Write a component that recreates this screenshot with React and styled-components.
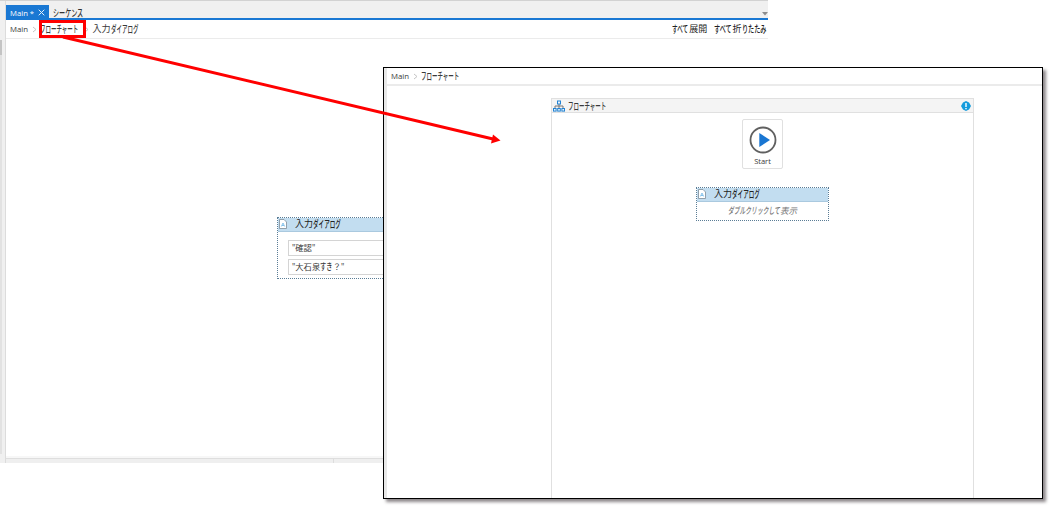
import React from 'react';
import styled, { createGlobalStyle } from 'styled-components';

const GlobalStyle = createGlobalStyle`
  * {
    box-sizing: border-box;
  }
  body {
    margin: 0;
    background: #fff;
    overflow: hidden;
    font-family: "Open Sans", "Noto Sans CJK JP", sans-serif;
    color: #3a3a3a;
  }
`;

const Stage = styled.main`
  position: relative;
  width: 1052px;
  height: 508px;
  overflow: hidden;
`;

const Line = styled.span`
  display: inline-flex;
  align-items: center;
  font-size: ${(p) => p.$size}px;
  line-height: 14px;
  height: 14px;
  white-space: pre;
  color: ${(p) => p.$color || 'inherit'};
  font-style: ${(p) => (p.$italic ? 'italic' : 'normal')};
`;

const Run = styled.span`
  display: block;
  width: ${(p) => p.$width}px;
  font-size: 1.1em;
  font-weight: 500;
  white-space: pre;
  transform: scaleX(${(p) => p.$scale});
  transform-origin: 0 50%;
`;

// kana is set narrow, kanji and latin keep their full width
const Label = ({ text, size = 9, kana = 0.65, ...rest }) => (
  <Line $size={size} {...rest}>
    {text.match(/[\u3040-\u30ff]+|[^\u3040-\u30ff]+/g).map((part, i) =>
      /[\u3040-\u30ff]/.test(part) ? (
        <Run key={i} $width={part.length * size * kana} $scale={kana / 1.1}>{part}</Run>
      ) : (
        <span key={i}>{part}</span>
      )
    )}
  </Line>
);

const EditorWindow = styled.section`
  position: absolute;
  left: 0;
  top: 0;
  width: 768px;
  height: 463px;
  display: flex;
  overflow: hidden;
  border-top: 1px solid #d2d2d2;
  background: #f0f0f0;
`;

const Gutter = styled.div`
  width: 6px;
  flex: none;
  border-right: 1px solid #dcdcdc;
  padding-top: 39px;
`;

const GutterThumb = styled.div`
  width: 2px;
  height: 414px;
  background: linear-gradient(#c4c4c4 15px, #e2e2e2 15px);
`;

const EditorBody = styled.div`
  flex: 1;
  display: flex;
  flex-direction: column;
`;

const TabBar = styled.div`
  height: 19px;
  flex: none;
  display: flex;
  padding-top: 4px;
  border-bottom: 2px solid #1a78d3;
`;

const Tab = styled.div`
  display: flex;
  align-items: center;
  height: 15px;
  padding-left: 4px;
  width: ${(p) => (p.$active ? 43 : 50)}px;
  background: ${(p) => (p.$active ? '#1a78d3' : 'transparent')};
  color: ${(p) => (p.$active ? '#fff' : '#333')};
`;

const CloseIcon = styled.svg`
  margin-left: 4px;
`;

const TabMenu = styled.svg`
  margin: 7px 0 0 auto;
`;

const Crumbs = styled.nav`
  display: flex;
  flex: none;
  align-items: center;
  height: ${(p) => p.$height}px;
  padding-left: 4px;
  background: #fff;
  border-bottom: ${(p) => p.$rule}px solid #ebebeb;
`;

const Chevron = styled.svg`
  flex: none;
  margin: 0 ${(p) => p.$after}px 0 ${(p) => p.$before}px;
`;

const CrumbActions = styled.div`
  display: flex;
  gap: 7px;
  margin-left: auto;
  padding-right: 2px;
  color: #222;
`;

const EditorCanvas = styled.div`
  flex: 1;
  background: #fff;
  padding: 178px 0 0 271px;
`;

const StatusBar = styled.div`
  height: 7px;
  flex: none;
  display: flex;
  border-top: 2px solid #f7f7f7;
  background: #efefef;
  box-shadow: inset 0 1px #dedede;
`;

const StatusPane = styled.div`
  width: ${(p) => p.$width}px;
  border-right: 1px solid #ddd;
`;

const Activity = styled.div`
  width: ${(p) => p.$width}px;
  height: ${(p) => p.$height}px;
  border: 1px dotted #5b7d96;
  background: #fff;
`;

const ActivityHead = styled.div`
  display: flex;
  align-items: center;
  height: 14px;
  padding: 0 0 2px 1px;
  gap: 8px;
  background: #c2ddf0;
  border-bottom: 1px solid #aac9df;
  color: #222;
`;

const Fields = styled.div`
  display: flex;
  flex-direction: column;
  gap: 3px;
  padding: 8px 10px 0;
`;

const Field = styled.div`
  display: flex;
  align-items: center;
  height: 16px;
  padding-left: 3px;
  border: 1px solid #d4d4d4;
`;

const Hint = styled.div`
  display: flex;
  justify-content: center;
  align-items: center;
  height: 18px;
`;

const FlowWindow = styled.section`
  position: absolute;
  left: 383px;
  top: 67px;
  width: 660px;
  height: 432px;
  display: flex;
  background: #fff;
  border: 1px solid #000;
  box-shadow: 3px 3px 3px rgba(50, 40, 45, 0.55);
`;

const Edge = styled.div`
  width: 3px;
  flex: none;
  background: #e8e8e8;
`;

const FlowBody = styled.div`
  flex: 1;
  display: flex;
  flex-direction: column;
`;

const Panel = styled.div`
  width: 423px;
  flex: 1;
  margin: 12px 0 0 164px;
  display: flex;
  flex-direction: column;
  align-items: center;
  border: 1px solid #e0e0e0;
  border-bottom: 0;
`;

const PanelHead = styled.div`
  align-self: stretch;
  display: flex;
  align-items: center;
  height: 14px;
  padding: 0 2px 0 1px;
  gap: 3px;
  background: #f4f4f4;
  border-bottom: 1px solid #e0e0e0;
`;

const InfoIcon = styled.svg`
  margin-left: auto;
`;

const StartNode = styled.div`
  display: flex;
  flex-direction: column;
  align-items: center;
  width: 41px;
  height: 50px;
  margin: 6px 0 18px;
  padding-top: 6px;
  border: 1px solid #e0e0e0;
  border-radius: 2px;
`;

const Arrow = styled.svg`
  position: absolute;
  left: 0;
  top: 0;
`;

const Separator = ({ before, after }) => (
  <Chevron $before={before} $after={after} width="5" height="7" viewBox="0 0 5 7">
    <path d="M1 1 L4 3.5 L1 6" fill="none" stroke="#c4c4c4" />
  </Chevron>
);

const DocIcon = () => (
  <svg width="8" height="10" viewBox="0 0 8 10">
    <path d="M.5 .5 H5 L7.5 3 V9.5 H.5 Z" fill="#fff" stroke="#7d8c97" strokeWidth=".8" />
    <path d="M2.3 7.5 L4 4 L5.7 7.5 M3 6.5 H5" fill="none" stroke="#6db5e6" strokeWidth=".8" />
  </svg>
);

const TreeIcon = () => (
  <svg width="12" height="12" viewBox="0 0 12 12">
    <path d="M6 4 V8 M2 8 V6 H10 V8" fill="none" stroke="#777" />
    <g fill="#e9f4fc" stroke="#2382d2">
      <rect x="4.5" y="1" width="3" height="3" />
      <rect x=".5" y="8.5" width="2.6" height="2.6" />
      <rect x="4.7" y="8.5" width="2.6" height="2.6" />
      <rect x="8.9" y="8.5" width="2.6" height="2.6" />
    </g>
  </svg>
);

const App = () => (
  <>
    <GlobalStyle />
    <Stage>
      <EditorWindow>
        <Gutter>
          <GutterThumb />
        </Gutter>
        <EditorBody>
          <TabBar>
            <Tab $active>
              <Label text="Main *" size={7.7} />
              <CloseIcon width="7" height="7" viewBox="0 0 7 7">
                <path d="M.7 .7 L6.3 6.3 M6.3 .7 L.7 6.3" stroke="#e3effa" />
              </CloseIcon>
            </Tab>
            <Tab>
              <Label text="シーケンス" kana={0.68} />
            </Tab>
            <TabMenu width="6" height="4" viewBox="0 0 6 4">
              <path d="M0 0 H6 L3 3.5 Z" fill="#8d8d8d" />
            </TabMenu>
          </TabBar>
          <Crumbs $height={19} $rule={1}>
            <Label text="Main" size={7.8} />
            <Separator before={4} after={3} />
            <Label text="フローチャート" kana={0.61} />
            <Separator before={5} after={4} />
            <Label text="入力ダイアログ" kana={0.61} />
            <CrumbActions>
              <Label text="すべて展開" kana={0.62} />
              <Label text="すべて折りたたみ" kana={0.68} />
            </CrumbActions>
          </Crumbs>
          <EditorCanvas>
            <Activity $width={134} $height={62}>
              <ActivityHead>
                <DocIcon />
                <Label text="入力ダイアログ" kana={0.62} />
              </ActivityHead>
              <Fields>
                <Field>
                  <Label text={'"確認"'} size={8.3} />
                </Field>
                <Field>
                  <Label text={'"大石泉すき？"'} size={8.3} kana={0.75} />
                </Field>
              </Fields>
            </Activity>
          </EditorCanvas>
          <StatusBar>
            <StatusPane $width={328} />
          </StatusBar>
        </EditorBody>
      </EditorWindow>

      <FlowWindow>
        <Edge />
        <FlowBody>
          <Crumbs $height={18} $rule={2}>
            <Label text="Main" size={7.8} />
            <Separator before={4} after={3} />
            <Label text="フローチャート" kana={0.61} />
          </Crumbs>
          <Panel>
            <PanelHead>
              <TreeIcon />
              <Label text="フローチャート" kana={0.61} />
              <InfoIcon width="10" height="10" viewBox="0 0 10 10">
                <path d="M5 0 L8 1.5 L10 5 L8 8.5 L5 10 L2 8.5 L0 5 L2 1.5 Z" fill="#159bdc" />
                <path d="M5 2 V6 M5 7 V8.3" stroke="#fff" strokeWidth="1.4" />
              </InfoIcon>
            </PanelHead>
            <StartNode>
              <svg width="28" height="28" viewBox="0 0 28 28">
                <circle cx="14" cy="14" r="12.5" fill="#fff" stroke="#606060" strokeWidth="1.8" />
                <path d="M10.3 7 L21 14 L10.3 21 Z" fill="#1976d2" />
              </svg>
              <Label text="Start" size={7.5} />
            </StartNode>
            <Activity $width={133} $height={34}>
              <ActivityHead>
                <DocIcon />
                <Label text="入力ダイアログ" kana={0.62} />
              </ActivityHead>
              <Hint>
                <Label text="ダブルクリックして表示" size={8.5} kana={0.68} $italic $color="#777" />
              </Hint>
            </Activity>
          </Panel>
        </FlowBody>
      </FlowWindow>

      <Arrow width="1052" height="508" viewBox="0 0 1052 508">
        <rect x="40.5" y="21.5" width="44" height="15" fill="none" stroke="#f00" strokeWidth="3" />
        <path d="M63 37 L493 139" stroke="#f00" strokeWidth="3" />
        <path d="M500.5 140.5 L491 143.5 L493 134.5 Z" fill="#f00" />
      </Arrow>
    </Stage>
  </>
);

export default App;
